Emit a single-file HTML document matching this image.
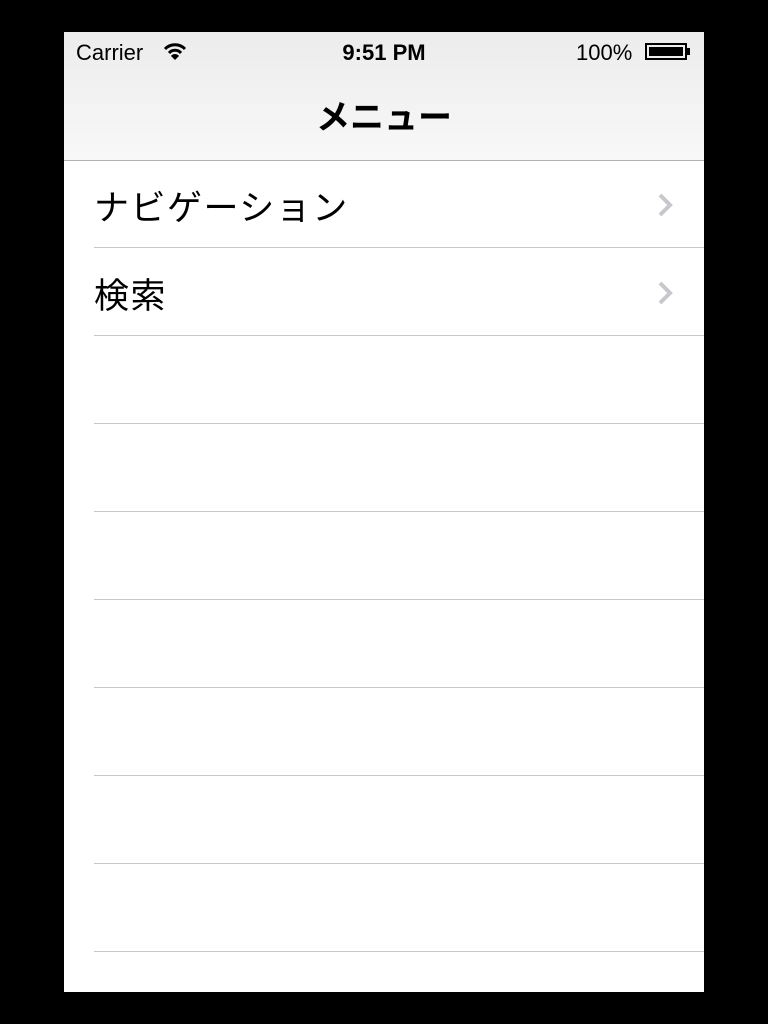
<!DOCTYPE html>
<html><head><meta charset="utf-8"><style>
body{margin:0;background:#000;width:768px;height:1024px;position:relative;overflow:hidden;font-family:"Liberation Sans","Noto Sans CJK JP",sans-serif}
#s{position:absolute;left:64px;top:32px;width:640px;height:960px;background:#fff;overflow:hidden}
#nav{position:absolute;left:0;top:0;width:640px;height:128px;background:linear-gradient(#ececec,#f8f8f8);border-bottom:1px solid #b2b2b2}
.sb{position:absolute;top:8px;font-size:22px;color:#000}
.t{position:absolute;top:58px;width:100%;text-align:center;font-size:34px;font-weight:bold}
.sep{position:absolute;left:30px;right:0;height:1px;background:#c8c7cc}
.c{position:absolute;left:30px;font-size:35px;letter-spacing:1.5px;color:#000}
.ch{position:absolute;left:592px}
</style></head><body><div id="s">
<div id="nav">
<div class="sb" style="left:12px">Carrier</div>
<svg style="position:absolute;left:99px;top:10px" width="24" height="20" viewBox="0 0 24 20"><path d="M2 7 A14 14 0 0 1 22 7" stroke="#000" stroke-width="3" fill="none"/><path d="M6 11 A8 8 0 0 1 18 11" stroke="#000" stroke-width="3" fill="none"/><path d="M12 18 L8 14 A5 5 0 0 1 16 14 Z" fill="#000"/></svg>
<div class="sb" style="left:0;width:640px;text-align:center;font-weight:bold">9:51 PM</div>
<div class="sb" style="left:512px">100%</div>
<div style="position:absolute;left:581px;top:11px;width:42px;height:17px;border:2px solid #000;box-sizing:border-box;padding:2px"><div style="background:#000;width:100%;height:100%"></div></div>
<div style="position:absolute;left:623px;top:16px;width:3px;height:7px;background:#000"></div>
<div class="t">メニュー</div>
</div>
<div class="c" style="top:148px">ナビゲーション</div>
<svg class="ch" style="top:161px" width="20" height="24" viewBox="0 0 20 24"><path d="M4 2 L14 12 L4 22" stroke="#c7c7cc" stroke-width="4" fill="none"/></svg>
<div class="c" style="top:236px">検索</div>
<svg class="ch" style="top:249px" width="20" height="24" viewBox="0 0 20 24"><path d="M4 2 L14 12 L4 22" stroke="#c7c7cc" stroke-width="4" fill="none"/></svg>
<div class="sep" style="top:215px"></div><div class="sep" style="top:303px"></div><div class="sep" style="top:391px"></div><div class="sep" style="top:479px"></div><div class="sep" style="top:567px"></div><div class="sep" style="top:655px"></div><div class="sep" style="top:743px"></div><div class="sep" style="top:831px"></div><div class="sep" style="top:919px"></div>
</div></body></html>
